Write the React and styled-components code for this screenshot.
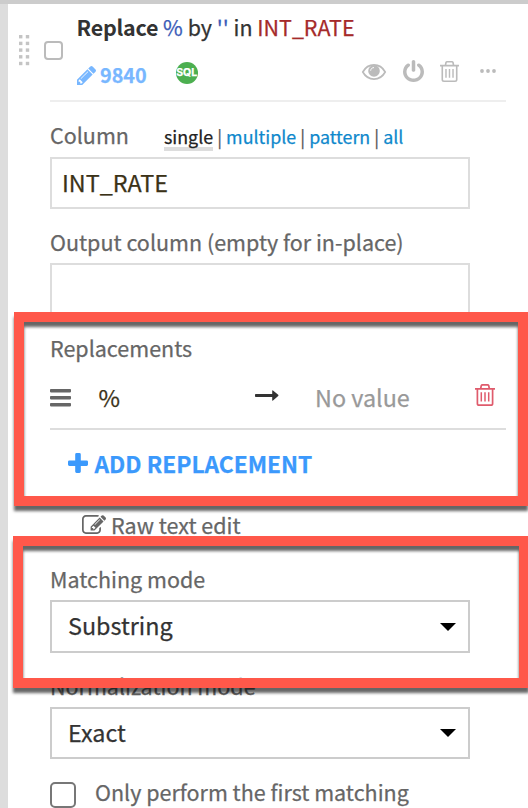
import React from "react";
import styled, { createGlobalStyle } from "styled-components";

const GlobalStyle = createGlobalStyle`
  *, *::before, *::after { box-sizing: border-box; }
  html, body { margin: 0; padding: 0; background: #fff; }
  body {
    font-family: "Noto Sans CJK SC", "Noto Sans", sans-serif;
    -webkit-text-stroke: 0.25px currentColor;
    overflow: hidden;
  }
`;

const Page = styled.div`
  position: relative;
  width: 528px;
  height: 808px;
  overflow: hidden;
  background: #fff;
  border-top: 4px solid #ccc;
  display: flex;
`;

const Rail = styled.div`
  flex: none;
  width: 8px;
  background: #ddd;
`;

const HandleColumn = styled.div`
  flex: none;
  width: 42px;
  padding: 31px 0 0 11px;
`;

const Body = styled.main`
  flex: none;
  width: 456px;
`;

const Header = styled.header`
  height: 98px;
  display: flex;
  border-bottom: 2px solid #eee;
`;

const Checkbox = styled.span`
  flex: none;
  width: ${(p) => p.$size}px;
  height: ${(p) => p.$size}px;
  margin-top: ${(p) => p.$top}px;
  margin-left: ${(p) => p.$left || 0}px;
  border: 2px solid ${(p) => p.$color};
  border-radius: ${(p) => p.$radius || 4}px;
  background: #fff;
`;

const HeaderMain = styled.div`
  flex: 1;
  padding-left: 13.5px;
`;

const Text = styled.span`
  display: inline-block;
  white-space: pre;
  font-size: ${(p) => p.$size}px;
  line-height: 30px;
  height: 30px;
  font-weight: ${(p) => p.$weight || 400};
  color: ${(p) => p.$color || "#666"};
`;

const Title = styled(Text).attrs({ as: "h1" })`
  display: block;
  margin: 8px 0 0;
  b { font-weight: 700; letter-spacing: -0.2px; -webkit-text-stroke: 0; }
  i { font-style: normal; color: #3b5cb8; }
  em { font-style: normal; color: #a52a2a; }
`;

const MetaRow = styled.div`
  display: flex;
  align-items: center;
  height: 30px;
  margin-top: 18px;
`;

const Badge = styled.span`
  width: 22px;
  height: 22px;
  margin: -4px 0 0 29px;
  border-radius: 50%;
  overflow: hidden;
  display: flex;
  align-items: center;
  justify-content: center;
  background: #4caf50;
  color: #fff;
  font: 700 10.5px/22px "Inter", sans-serif;
`;

const Actions = styled.div`
  display: flex;
  align-items: center;
  margin: -9px 10px 0 auto;
`;

const Icon = styled.svg`
  display: block;
  flex: none;
  width: ${(p) => p.$w}px;
  height: ${(p) => p.$h}px;
  margin: ${(p) => p.$m || 0};
  overflow: visible;
`;

const LabelRow = styled.div`
  display: flex;
  height: 30px;
  margin-top: ${(p) => p.$top}px;
`;

const Modes = styled.nav`
  display: flex;
  height: 32px;
  margin: 2px 0 0 35px;
  font-size: 17.85px;
  line-height: 29px;
  white-space: pre;
  color: #555;
`;

const Mode = styled.a`
  height: ${(p) => (p.$active ? 29 : 28)}px;
  color: ${(p) => (p.$active ? "#222" : "#0e88cc")};
  border-bottom: ${(p) => (p.$active ? "4px solid #ddd" : "none")};
`;

const Divider = styled.span`
  width: 13px;
  text-align: center;
`;

const Field = styled.div`
  width: 420px;
  height: ${(p) => p.$h}px;
  margin-top: ${(p) => p.$top}px;
  padding: ${(p) => p.$pad};
  border: 2px solid ${(p) => p.$border || "#ddd"};
  background: #fff;
  display: flex;
  justify-content: space-between;
`;

const Caret = styled.span`
  width: 0;
  height: 0;
  margin: ${(p) => p.$top}px 12px 0 0;
  border: 8px solid transparent;
  border-top-color: #000;
  border-bottom: 0;
`;

const ReplacementRow = styled.div`
  display: flex;
  height: 67px;
  border-bottom: 2px solid #ddd;
`;

const ReplacementText = styled.div`
  padding: 19px 0 0 ${(p) => p.$left}px;
`;

const OptionText = styled.label`
  padding-left: 19px;
`;

const Action = styled.div`
  display: flex;
  height: 30px;
  margin-top: ${(p) => p.$top}px;
  padding-left: ${(p) => p.$left}px;
`;

const Highlight = styled.div`
  position: absolute;
  z-index: 2;
  left: ${(p) => p.$x}px;
  top: ${(p) => p.$y - 4}px;
  width: ${(p) => p.$w}px;
  height: ${(p) => p.$h}px;
  border: 10px solid #ff584a;
  filter: drop-shadow(0 5px 1.5px rgba(0, 0, 0, 0.6));
`;

function DragHandle() {
  const rows = [0, 6.7, 13.4, 20.1, 26.8];
  return (
    <Icon $w={11} $h={31} viewBox="0 0 11 31" fill="#c4c4c4">
      {rows.map((y) => (
        <g key={y}>
          <rect x="0" y={y} width="3.4" height="3.4" />
          <rect x="6.8" y={y} width="3.4" height="3.4" />
        </g>
      ))}
    </Icon>
  );
}

function Pencil() {
  return (
    <Icon $w={19} $h={19} $m="0 4.5px 0 0" viewBox="128 149 1515 1515" fill="#78b7ff">
      <path d="M491 1536l91-91-235-235-91 91v107h128v128h107zM1014 608q0-22-22-22-10 0-17 7l-542 542q-7 7-7 17 0 22 22 22 10 0 17-7l542-542q7-7 7-17zM960 416l416 416-832 832h-416v-416zM1643 512q0 53-37 90l-166 166-416-416 166-165q36-38 90-38 53 0 91 38l235 234q37 39 37 91z" />
    </Icon>
  );
}

function Eye() {
  return (
    <Icon $w={24} $h={16} $m="2px 0 0" viewBox="0 0 24 16" fill="none" stroke="#bbb">
      <path d="M.8 8C6-1.4 18-1.4 23.2 8 18 17.4 6 17.4.8 8Z" strokeWidth="1.7" />
      <circle cx="12" cy="6.9" r="5.8" fill="#bbb" stroke="none" />
      <path d="M8.7 6.3C8.9 4.7 10 3.7 11.6 3.6" stroke="#fff" strokeWidth="1" strokeLinecap="round" />
    </Icon>
  );
}

function Power() {
  return (
    <Icon $w={21} $h={22} $m="0 0 0 17px" viewBox="128 0 1536 1664" preserveAspectRatio="none" fill="#bbb">
      <path d="M1664 896q0 156-61 298t-164 245-245 164-298 61-298-61-245-164-164-245-61-298q0-182 80.5-343t226.5-270q43-32 95.5-25t83.5 50q32 42 24.5 94.5t-49.5 84.5q-98 74-151.5 181t-53.5 228q0 104 40.5 198.5t109.5 163.5 163.5 109.5 198.5 40.5 198.5-40.5 163.5-109.5 109.5-163.5 40.5-198.5q0-121-53.5-228t-151.5-181q-42-32-49.5-84.5t24.5-94.5q31-43 84-50t95 25q146 109 226.5 270t80.5 343zM1024 128v640q0 52-38 90t-90 38-90-38-38-90v-640q0-52 38-90t90-38 90 38 38 90z" />
    </Icon>
  );
}

function Trash({ color, w, h, m }) {
  return (
    <Icon $w={w} $h={h} $m={m} viewBox="0 0 20 22" preserveAspectRatio="none" fill="none" stroke={color} strokeWidth="1.7">
      <path d="M0 4.8H20M5.7 4.5L6.3 1.6Q6.6.8 7.5.8H12.5Q13.4.8 13.7 1.6L14.3 4.5M2.4 4.8V19.4Q2.4 21.2 4.2 21.2H15.8Q17.6 21.2 17.6 19.4V4.8" />
      <path d="M6.3 8.3V17.6M10 8.3V17.6M13.7 8.3V17.6" strokeWidth="1.5" />
    </Icon>
  );
}

function Dots() {
  return (
    <Icon $w={16} $h={4} $m="0 0 0 21px" viewBox="0 0 16 4" fill="#bbb">
      <circle cx="2" cy="2" r="1.9" />
      <circle cx="8" cy="2" r="1.9" />
      <circle cx="14" cy="2" r="1.9" />
    </Icon>
  );
}

function Bars() {
  return (
    <Icon $w={21} $h={18} $m="26px 0 0" viewBox="0 0 21 18" fill="#666">
      <rect y="0" width="21" height="3.4" rx=".8" />
      <rect y="7" width="21" height="3.4" rx=".8" />
      <rect y="14" width="21" height="3.4" rx=".8" />
    </Icon>
  );
}

function Arrow() {
  return (
    <Icon $w={24} $h={11} $m="27px 0 0 134.5px" viewBox="0 0 24 11" fill="#333">
      <path d="M.8 3.9H17.2V.8Q17.2 0 18 .5L23.2 4.8Q23.8 5.4 23.2 6L18 10.4Q17.2 11 17.2 10.2V7.1H.8Q0 7.1 0 6.3V4.7Q0 3.9.8 3.9Z" />
    </Icon>
  );
}

function Plus() {
  return (
    <Icon $w={20} $h={20} $m="4px 6.5px 0 0" viewBox="0 0 20 20" fill="#3b99fc">
      <path d="M8.6 0H11.4Q12.8 0 12.8 1.4V7.4H18.6Q20 7.4 20 8.8V11.5Q20 12.9 18.6 12.9H12.8V18.6Q12.8 20 11.4 20H8.6Q7.2 20 7.2 18.6V12.9H1.4Q0 12.9 0 11.5V8.8Q0 7.4 1.4 7.4H7.2V1.4Q7.2 0 8.6 0Z" />
    </Icon>
  );
}

function Edit() {
  return (
    <Icon $w={24} $h={19} $m="5px 5px 0 0" viewBox="0 128 1784 1408" fill="#666">
      <path d="M888 1184l116-116-152-152-116 116v56h96v96h56zM1328 464q-16-16-33 1l-350 350q-17 17-1 33t33-1l350-350q17-17 1-33zM1408 1058v190q0 119-84.5 203.5t-203.5 84.5h-832q-119 0-203.5-84.5t-84.5-203.5v-832q0-119 84.5-203.5t203.5-84.5h832q63 0 117 25 15 7 18 23 3 17-9 29l-49 49q-14 14-32 8-23-6-45-6h-832q-66 0-113 47t-47 113v832q0 66 47 113t113 47h832q66 0 113-47t47-113v-126q0-13 9-22l64-64q15-15 35-7t20 29zM1312 320l288 288-672 672h-288v-288zM1756 452l-92 92-288-288 92-92q28-28 68-28t68 28l152 152q28 28 28 68t-28 68z" />
    </Icon>
  );
}

const LABEL = 21.5;
const VALUE = 23.35;

export default function App() {
  return (
    <Page>
      <GlobalStyle />
      <Rail />
      <HandleColumn>
        <DragHandle />
      </HandleColumn>
      <Body>
        <Header>
          <Checkbox $size={19} $top={37} $left={-6} $color="#bbb" />
          <HeaderMain>
            <Title $size={21.45} $color="#333">
              <b>Replace</b> <i>%</i> by <i>''</i> in <em>INT_RATE</em>
            </Title>
            <MetaRow>
              <Pencil />
              <Text $size={19.8} $weight={700} $color="#78b7ff">9840</Text>
              <Badge>SQL</Badge>
              <Actions>
                <Eye />
                <Power />
                <Trash color="#bbb" w={19} h={21} m="1px 0 0 16px" />
                <Dots />
              </Actions>
            </MetaRow>
          </HeaderMain>
        </Header>

        <LabelRow $top={18}>
          <Text $size={LABEL}>Column</Text>
          <Modes>
            <Mode $active>single</Mode>
            <Divider>|</Divider>
            <Mode>multiple</Mode>
            <Divider>|</Divider>
            <Mode>pattern</Mode>
            <Divider>|</Divider>
            <Mode>all</Mode>
          </Modes>
        </LabelRow>
        <Field $h={52} $top={7} $pad="8px 10px">
          <Text $size={VALUE} $color="#3b3217">INT_RATE</Text>
        </Field>

        <LabelRow $top={18}>
          <Text $size={LABEL}>Output column (empty for in-place)</Text>
        </LabelRow>
        <Field $h={52} $top={6} $pad="8px 10px" />

        <LabelRow $top={18}>
          <Text $size={LABEL}>Replacements</Text>
        </LabelRow>
        <ReplacementRow>
          <Bars />
          <ReplacementText $left={27.5}>
            <Text $size={VALUE} $color="#3b3217">%</Text>
          </ReplacementText>
          <Arrow />
          <ReplacementText $left={36.5}>
            <Text $size={VALUE} $color="#999">No value</Text>
          </ReplacementText>
          <Trash color="#df5b6c" w={20} h={22} m="21px 11px 0 auto" />
        </ReplacementRow>
        <Action $top={19} $left={18}>
          <Plus />
          <Text $size={22.75} $weight={700} $color="#3b99fc">ADD REPLACEMENT</Text>
        </Action>
        <Action $top={31} $left={32}>
          <Edit />
          <Text $size={LABEL}>Raw text edit</Text>
        </Action>

        <LabelRow $top={24}>
          <Text $size={LABEL}>Matching mode</Text>
        </LabelRow>
        <Field $h={53} $top={6} $pad="8px 0 0 16px" $border="#ccc">
          <Text $size={VALUE} $color="#333">Substring</Text>
          <Caret $top={13} />
        </Field>

        <LabelRow $top={18}>
          <Text $size={LABEL}>Normalization mode</Text>
        </LabelRow>
        <Field $h={52} $top={6} $pad="8px 0 0 16px" $border="#ccc">
          <Text $size={VALUE} $color="#333">Exact</Text>
          <Caret $top={12} />
        </Field>

        <LabelRow $top={18}>
          <Checkbox $size={26} $top={5} $color="#777" $radius={5} />
          <OptionText>
            <Text $size={LABEL}>Only perform the first matching</Text>
          </OptionText>
        </LabelRow>
      </Body>

      <Highlight $x={14} $y={312} $w={514} $h={194} />
      <Highlight $x={13} $y={536} $w={516} $h={152} />
    </Page>
  );
}
